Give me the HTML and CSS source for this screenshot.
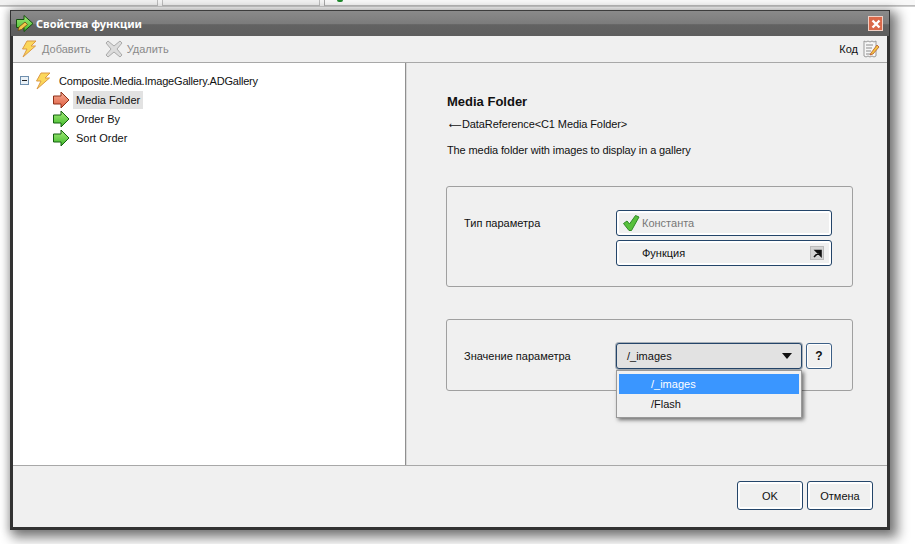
FILE: index.html
```html
<!DOCTYPE html>
<html lang="ru">
<head>
<meta charset="utf-8">
<title>Свойства функции</title>
<link rel="stylesheet" href="styles.css">
</head>
<body>
<div class="browser-strip">
  <div class="strip-tab tab-a"></div>
  <div class="strip-tab tab-b"></div>
  <div class="strip-tab tab-c"><span class="strip-dot"></span></div>
</div>
<div class="dialog">
  <header class="titlebar">
    <svg class="title-icon" viewBox="0 0 19 19" width="19" height="19"><defs><linearGradient id="g" x1="0" y1="0" x2="0" y2="1"><stop offset="0" stop-color="#a6ec7a"/><stop offset="1" stop-color="#3eb82a"/></linearGradient><linearGradient id="r" x1="0" y1="0" x2="0" y2="1"><stop offset="0" stop-color="#f7b09a"/><stop offset="1" stop-color="#dd5a3c"/></linearGradient></defs><path d="M1.500 5.500h7.500V1.500l9 8-9 8v-4H1.500z" fill="url(#g)" stroke="#14500f"/><path d="M3 16.500l1-3.500 6-5 2.500 2.500-6 5z" fill="#f3c64a" stroke="#6a4a14" stroke-width=".8"/></svg>
    <span class="title-text">Свойства функции</span>
    <span class="close-btn"><svg viewBox="0 0 10 10" width="10" height="10"><path d="M1.500 1.500l7 7M8.500 1.500l-7 7" stroke="#fff" stroke-width="2.400"/></svg></span>
  </header>
  <div class="toolbar">
    <span class="tool disabled">
      <svg viewBox="0 0 16 18" width="16" height="18"><path d="M6 1h9l-5 5h4.500L2 17l4-8H1.500z" fill="#fbd75a" stroke="#dc9a45"/></svg>
      Добавить
    </span>
    <span class="tool disabled">
      <svg viewBox="0 0 18 18" width="18" height="18"><path d="M3 1l6 5 6-5 2 2-5 6 5 6-2 2-6-5-6 5-2-2 5-6-5-6z" fill="#dcdcdc" stroke="#aaa"/></svg>
      Удалить
    </span>
    <span class="tool code-tool">
      Код
      <svg viewBox="0 0 17 18" width="17" height="18"><path d="M1 1l2 1 2-1 2 1 2-1 2 1 2-1v15l-2 1-2-1-2 1-2-1-2 1-2-1z" fill="#f6f6f6" stroke="#9a9a9a"/><path d="M3 5h7M3 8h6M3 11h5M3 14h5" stroke="#8c8c8c"/><path d="M8 13l6-8 2 2-6 7-3 1z" fill="#f4c542" stroke="#b5562a" stroke-width=".8"/></svg>
    </span>
  </div>
  <div class="main">
    <nav class="tree">
      <div class="tree-root">
        <span class="expander"></span>
        <svg class="root-bolt" viewBox="0 0 16 18" width="16" height="18"><path d="M6 1h9l-5 5h4.500L2 17l4-8H1.500z" fill="#fbd75a" stroke="#dc9a45"/></svg>
        <span class="node-label root-label">Composite.Media.ImageGallery.ADGallery</span>
      </div>
      <div class="tree-item">
        <svg viewBox="0 0 18 18" width="18" height="18"><path d="M1.500 5h7.500V1l8 8-8 8v-4H1.500z" fill="url(#r)" stroke="#8e3018"/></svg>
        <span class="node-label selected">Media Folder</span>
      </div>
      <div class="tree-item">
        <svg viewBox="0 0 18 18" width="18" height="18"><path d="M1.500 5h7.500V1l8 8-8 8v-4H1.500z" fill="url(#g)" stroke="#14600f"/></svg>
        <span class="node-label">Order By</span>
      </div>
      <div class="tree-item">
        <svg viewBox="0 0 18 18" width="18" height="18"><path d="M1.500 5h7.500V1l8 8-8 8v-4H1.500z" fill="url(#g)" stroke="#14600f"/></svg>
        <span class="node-label">Sort Order</span>
      </div>
    </nav>
    <section class="details">
      <h2 class="param-name">Media Folder</h2>
      <p class="param-type"><span class="type-arrow">⟵</span>DataReference&lt;C1 Media Folder&gt;</p>
      <p class="param-help">The media folder with images to display in a gallery</p>
      <div class="group type-group">
        <span class="group-label">Тип параметра</span>
        <div class="choice-col">
          <div class="choice checked">
            <svg viewBox="0 0 18 18" width="18" height="18"><path d="M1.500 9.500l3.500-2.500 2.500 3L13.500 1.500l3.500 1.500-7.500 13.500H7z" fill="#58c03c" stroke="#2f8a26"/></svg>
            <span>Константа</span>
          </div>
          <div class="choice">
            <span class="choice-text">Функция</span>
            <span class="jump"><svg viewBox="0 0 9 9" width="9" height="9"><path d="M1 8l5-5M2.500 1.500h5.500v5.500z" stroke="#111" stroke-width="1.600" fill="#111"/></svg></span>
          </div>
        </div>
      </div>
      <div class="group value-group">
        <span class="group-label">Значение параметра</span>
        <div class="select">
          <span>/_images</span>
          <span class="caret"></span>
        </div>
        <span class="help-btn">?</span>
        <ul class="menu">
          <li class="menu-on">/_images</li>
          <li>/Flash</li>
        </ul>
      </div>
    </section>
  </div>
  <footer class="footer">
    <span class="btn">OK</span>
    <span class="btn">Отмена</span>
  </footer>
</div>
</body>
</html>
```
FILE: styles.css
```css
* { box-sizing: border-box; }
html, body { margin: 0; height: 100%; }
body {
  background: #fff;
  font-family: "Liberation Sans", Arial, sans-serif;
  font-size: 11px;
  color: #111;
  overflow: hidden;
  position: relative;
}
.browser-strip { position: absolute; left: 0; top: 0; right: 0; height: 7px; display: flex; gap: 4px; background: #f4f4f4; border-bottom: 1px solid #cfcfcf; }
.strip-tab { height: 6px; background: #f1f1f1; border-right: 1px solid #bdbdbd; border-bottom: 1px solid #bdbdbd; }
.tab-a { width: 158px; }
.tab-b { width: 158px; border-left: 1px solid #bdbdbd; }
.tab-c { flex: 1; background: #f8f8f8; border-left: 1px solid #a8a8a8; border-right: 0; }
.strip-dot { display: block; width: 6px; height: 2px; margin-left: 12px; background: #1f8a2e; border-radius: 0 0 3px 3px; }
.dialog {
  position: absolute;
  left: 10px; top: 10px;
  width: 880px; height: 520px;
  display: flex;
  flex-direction: column;
  background: #f0f0f0;
  border: 3px solid #333;
  border-top: 1px solid #3c3c3c;
  box-shadow: 5px 5px 11px 3px rgba(0,0,0,.48), -1px 0 7px 2px rgba(0,0,0,.13);
}
.titlebar {
  height: 25px;
  flex: none;
  margin: 0 -2px;
  padding: 0 6px 0 4px;
  display: flex;
  align-items: center;
  gap: 2px;
  background: linear-gradient(#8a8a8a, #7c7c7c 50%, #626262 55%, #5e5e5e);
  color: #fff;
  font: 700 11px "Noto Sans", sans-serif;
}
.title-text { flex: 1; }
.close-btn { width: 15px; height: 15px; display: flex; align-items: center; justify-content: center; background: #d9694a; border: 1px solid #f1d0c5; }
.toolbar {
  height: 27px;
  flex: none;
  display: flex;
  align-items: center;
  gap: 14px;
  padding: 0 7px 1px 8px;
  background: #f0f0f0;
  border-bottom: 1px solid #a8a8a8;
}
.tool { display: flex; align-items: center; gap: 4px; }
.tool:first-child { gap: 5px; }
.disabled { color: #8a8a8a; }
.code-tool { margin-left: auto; gap: 5px; }
.main { flex: 1; display: flex; min-height: 0; border-bottom: 1px solid #a8a8a8; }
.tree { flex: none; width: 393px; background: #fff; padding: 8px 0 0 7px; border-right: 1px solid #8f8f8f; }
.tree-root { height: 19px; display: flex; align-items: center; }
.expander { width: 9px; height: 9px; margin-right: 6px; border: 1px solid #6f8fae; background: linear-gradient(#222, #222) center / 5px 1px no-repeat, #eaf1f7; }
.root-bolt { margin-right: 5px; }
.root-label { letter-spacing: -.2px; }
.tree-item { height: 19px; margin-left: 32px; display: flex; align-items: center; gap: 3px; }
.node-label { padding: 0 3px; line-height: 18px; white-space: nowrap; }
.selected { background: #e2e2e2; }
.details { flex: 1; padding: 31px 34px 0 40px; border-left: 1px solid #d8d8d8; }
.param-name { margin: 0; font-size: 13px; font-weight: 700; line-height: 16px; }
.param-type { margin: 6px 0 0; height: 16px; line-height: 16px; letter-spacing: -.1px; }
.type-arrow { display: inline-block; width: 15px; padding-left: 2px; line-height: 0; font-size: 9px; font-family: "DejaVu Sans", sans-serif; }
.param-help { margin: 10px 0 0; line-height: 16px; letter-spacing: -.11px; }
.group { margin: 28px 0 0 -1px; padding: 0 20px 0 17px; display: flex; border: 1px solid #a0a0a0; border-radius: 3px; position: relative; }
.type-group { height: 101px; padding-top: 23px; }
.value-group { height: 72px; margin-top: 32px; padding-top: 23px; }
.group-label { width: 152px; line-height: 26px; }
.choice-col { display: flex; flex-direction: column; gap: 4px; }
.choice { width: 216px; height: 26px; display: flex; align-items: center; gap: 2px; padding: 0 7px 0 5px; background: #f0f0f0; border: 1px solid #24456a; border-radius: 3px; box-shadow: inset 0 0 0 2px #fff; color: #111; }
.checked span { color: #777; }
.choice-text { flex: 1; padding-left: 20px; }
.jump { width: 14px; height: 14px; display: flex; align-items: center; justify-content: center; background: #d4d4d4; border: 1px solid #bbb; }
.select { width: 186px; height: 26px; display: flex; align-items: center; justify-content: space-between; padding: 0 9px 0 10px; background: #e2e2e2; border: 1px solid #24456a; border-radius: 3px; box-shadow: 0 0 0 1px #a8b0b8; }
.caret { width: 0; height: 0; border: 5px solid transparent; border-top: 6px solid #111; border-bottom: 0; }
.help-btn { width: 26px; height: 26px; margin-left: 4px; display: flex; align-items: center; justify-content: center; font-weight: 700; font-size: 12px; background: #f0f0f0; border: 1px solid #3c5f86; border-radius: 3px; box-shadow: inset 0 0 0 1px #fff; }
.menu { position: absolute; left: 169px; top: 50px; width: 186px; margin: 0; padding: 3px 2px; list-style: none; background: #f0f0f0; border: 1px solid #999; box-shadow: 2px 2px 4px rgba(0,0,0,.55); }
.menu li { height: 20px; line-height: 20px; padding-left: 32px; }
.menu .menu-on { background: #3a96ff; color: #fff; }
.footer { flex: none; height: 61px; display: flex; justify-content: flex-end; align-items: center; gap: 4px; padding: 0 14px 2px 0; }
.btn { height: 29px; display: flex; align-items: center; justify-content: center; width: 66px; background: #f0f0f0; border: 1px solid #24456a; border-radius: 3px; box-shadow: inset 0 0 0 2px #fff; }
```
